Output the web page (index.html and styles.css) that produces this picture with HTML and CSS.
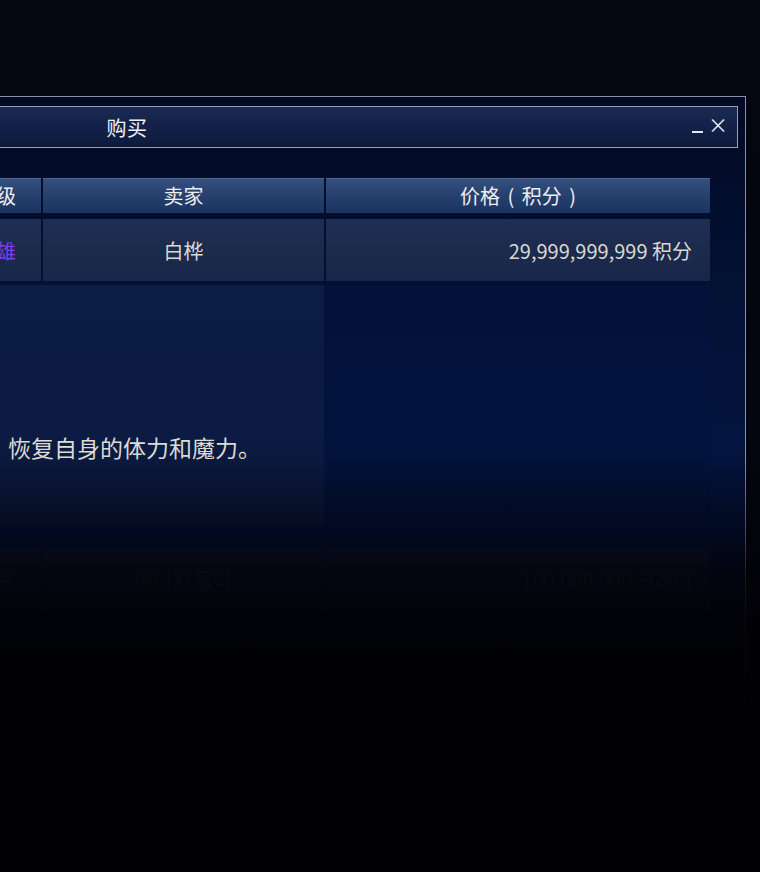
FILE: index.html
```html
<!DOCTYPE html>
<html lang="zh-CN">
<head>
<meta charset="utf-8">
<title>购买</title>
<link rel="stylesheet" href="styles.css">
</head>
<body>
<div class="desktop">
  <section class="window">
    <header class="titlebar">
      <span></span>
      <span class="title">购买</span>
      <span class="controls"><span class="min"></span><span class="close">×</span></span>
    </header>

    <div class="grid head">
      <div class="cell">道具名称</div>
      <div class="cell">等级</div>
      <div class="cell">卖家</div>
      <div class="cell spaced">价格 ( 积分 )</div>
    </div>

    <div class="grid row">
      <div class="cell">超级回复药水</div>
      <div class="cell grade">英雄</div>
      <div class="cell">白桦</div>
      <div class="cell price">29,999,999,999 积分</div>
    </div>

    <div class="grid detail">
      <div class="desc">
        <p class="desc-text">恢复自身的体力和魔力。</p>
      </div>
      <div class="side"></div>
    </div>

    <div class="grid row faded">
      <div class="cell">에너지 물약</div>
      <div class="cell">일반</div>
      <div class="cell">에너지 물약</div>
      <div class="cell price">100,000,000 크레딧</div>
    </div>
  </section>
  <div class="fade"></div>
</div>
</body>
</html>
```

FILE: styles.css
```css
* { box-sizing: border-box; }

html, body {
  margin: 0;
  padding: 0;
  background: #03040c;
}

body {
  font-family: "Noto Sans CJK SC", "Noto Sans", "Noto Sans CJK KR", sans-serif;
  color: #dcd9d2;
}

.desktop {
  position: relative;
  width: 760px;
  height: 872px;
  overflow: hidden;
  background: linear-gradient(180deg, #05060f 0%, #03040d 60%, #020207 100%);
}

.window {
  position: absolute;
  top: 96px;
  right: 14px;
  width: 1238px;
  height: 720px;
  border: 1px solid #8a90ab;
  padding: 9px 7px 0 7px;
  background: linear-gradient(180deg, #020a24 0%, #031236 30%, #03143f 50%, #020c28 80%);
}

.titlebar {
  height: 42px;
  border: 1px solid #989eb6;
  background: linear-gradient(180deg, #1a2a52 0%, #13214a 50%, #0d1a3c 100%);
  display: grid;
  grid-template-columns: 1fr auto 1fr;
  align-items: center;
}

.title {
  font-size: 20px;
  color: #f1f1f3;
  letter-spacing: 0.5px;
}

.controls {
  justify-self: end;
  display: flex;
  align-items: center;
  gap: 5px;
  padding-right: 9px;
  color: #e4e7ef;
}

.min {
  width: 11px;
  height: 2px;
  background: #e4e7ef;
  margin-top: 9px;
}

.close {
  font-size: 20px;
  line-height: 1;
  margin-top: -4px;
}

.grid {
  display: grid;
  grid-template-columns: 1fr 90px 281px 384px;
  column-gap: 2px;
  margin-left: 28px;
  margin-right: 28px;
}

.cell {
  display: flex;
  align-items: center;
  justify-content: center;
  font-size: 20px;
  white-space: pre;
}

.spaced {
  word-spacing: 3px;
}

.head {
  margin-top: 30px;
  height: 35px;
}

.head .cell {
  color: #eeeeee;
  background: linear-gradient(180deg, #35517f 0%, #27426f 45%, #1b3361 100%);
  box-shadow: inset 0 1px 0 rgba(120, 150, 200, 0.35);
}

.row {
  margin-top: 6px;
  height: 62px;
}

.row .cell {
  color: #dad7d0;
  background: linear-gradient(180deg, #1f2e52 0%, #1b2a4d 50%, #18264a 100%);
}

.row .grade {
  color: #7a3ff2;
}

.row .price {
  justify-content: flex-end;
  padding-right: 18px;
}

.detail {
  margin-top: 4px;
  height: 240px;
  grid-template-columns: 1fr 384px;
}

.desc {
  background: linear-gradient(180deg, #0c1d46 0%, #0b1b43 60%, #0a173a 100%);
  display: flex;
  justify-content: flex-end;
}

.desc-text {
  margin: 0;
  width: 388px;
  padding-top: 146px;
  font-size: 23px;
  line-height: 32px;
  color: #dedbd3;
  padding-left: 72px;
}

.side {
  background: linear-gradient(180deg, #02123b 0%, #02133d 70%, #021035 100%);
}

.faded {
  margin-top: 24px;
}

.faded .cell {
  color: #2b3550;
  background: #0e1a36;
}

.fade {
  position: absolute;
  inset: 0;
  pointer-events: none;
  background: linear-gradient(180deg,
    rgba(2, 2, 8, 0) 0%,
    rgba(2, 2, 8, 0) 52%,
    rgba(2, 2, 8, 0.45) 60%,
    rgba(2, 2, 8, 0.85) 66%,
    rgba(2, 2, 6, 0.96) 72%,
    rgba(1, 1, 3, 1) 85%);
}
```
